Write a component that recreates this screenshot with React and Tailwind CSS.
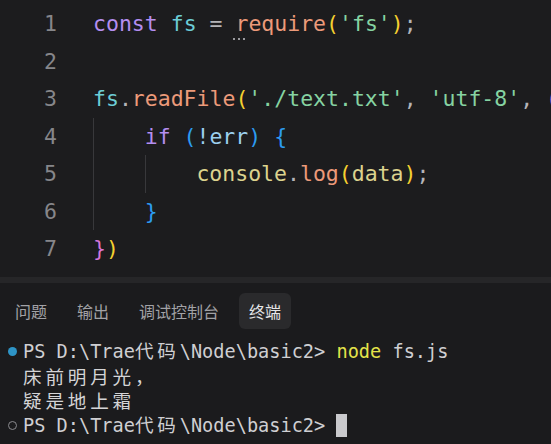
import React from "react";

const mono = { fontFamily: '"DejaVu Sans Mono", "Liberation Mono", "Noto Sans CJK SC", monospace' };

const C = {
  kw: "text-[#b48ef0]",
  id: "text-[#6ccdd6]",
  op: "text-[#b4b4b8]",
  fn: "text-[#ec9a7a]",
  str: "text-[#86d3a2]",
  y: "text-[#f5d030]",
  m: "text-[#d775d8]",
  b: "text-[#2c9bf0]",
  v: "text-[#9ccfee]",
  yl: "text-[#dcd38e]",
};

const Indent = () => <div className="self-stretch w-[51.7px] shrink-0 border-l border-[#38383b]" />;

const Line = ({ n, indent = 0, children }) => (
  <div className="flex h-[37.5px] items-center">
    <div className="w-[57px] shrink-0 text-right text-[#86868a]">{n}</div>
    <div className="ml-[36px] flex self-stretch items-center whitespace-pre">
      {Array.from({ length: indent }).map((_, i) => (
        <Indent key={i} />
      ))}
      <span>{children}</span>
    </div>
  </div>
);

const Cjk = ({ text }) =>
  text.split("").map((ch, i) => (
    <span key={i} className="inline-block w-[22.4px]" style={{ fontFamily: '"Noto Sans CJK SC", sans-serif' }}>
      {ch}
    </span>
  ));

export default function App() {
  return (
    <div className="w-[551px] h-[444px] overflow-hidden bg-[#1c1c1e] flex flex-col">
      {/* Editor */}
      <div className="h-[277px] pt-[5px] text-[21.5px] leading-none" style={mono}>
        <Line n="1">
          <span className={C.kw}>const</span> <span className={C.id}>fs</span> <span className={C.op}>=</span>{" "}
          <span className={`${C.fn} relative`}>
            r
            <span className="absolute left-[-2px] top-[27px] flex gap-[3px]">
              <span className="w-[2px] h-[2px] bg-[#9a9a9e]" />
              <span className="w-[2px] h-[2px] bg-[#9a9a9e]" />
              <span className="w-[2px] h-[2px] bg-[#9a9a9e]" />
            </span>
          </span>
          <span className={C.fn}>equire</span>
          <span className={C.y}>(</span>
          <span className={C.str}>'fs'</span>
          <span className={C.y}>)</span>
          <span className={C.op}>;</span>
        </Line>
        <Line n="2"> </Line>
        <Line n="3">
          <span className={C.id}>fs</span>
          <span className={C.op}>.</span>
          <span className={C.fn}>readFile</span>
          <span className={C.y}>(</span>
          <span className={C.str}>'./text.txt'</span>
          <span className={C.op}>, </span>
          <span className={C.str}>'utf-8'</span>
          <span className={C.op}>, </span>
          <span className={C.m}>(</span>
        </Line>
        <Line n="4" indent={1}>
          <span className={C.kw}>if</span> <span className={C.b}>(</span>
          <span className={C.v}>!err</span>
          <span className={C.b}>)</span> <span className={C.b}>{"{"}</span>
        </Line>
        <Line n="5" indent={2}>
          <span className={C.yl}>console</span>
          <span className={C.op}>.</span>
          <span className={C.fn}>log</span>
          <span className={C.y}>(</span>
          <span className={C.yl}>data</span>
          <span className={C.y}>)</span>
          <span className={C.op}>;</span>
        </Line>
        <Line n="6" indent={1}>
          <span className={C.b}>{"}"}</span>
        </Line>
        <Line n="7">
          <span className={C.m}>{"}"}</span>
          <span className={C.y}>)</span>
        </Line>
      </div>

      {/* Divider */}
      <div className="h-[6px] bg-[#262628]" />

      {/* Panel */}
      <div className="flex-1 bg-[#1b1b1d]">
        <div
          className="mt-[10px] flex gap-[10px] pl-[5px] text-[16px]"
          style={{ fontFamily: '"Noto Sans CJK SC", sans-serif' }}
        >
          {["问题", "输出", "调试控制台"].map((t) => (
            <div key={t} className="h-[36px] px-[10px] flex items-center rounded-md text-[#a2a2a6]">
              {t}
            </div>
          ))}
          <div className="h-[36px] px-[10px] flex items-center rounded-md bg-[#2a2a2c] text-[#e6e6e8]">终端</div>
        </div>

        <div className="mt-[10px] text-[18.6px] leading-[24.7px] text-[#cfcfd2]" style={mono}>
          <div className="flex items-center h-[24.7px] whitespace-pre">
            <div className="w-[23px] flex justify-center pl-[1px]">
              <div className="w-[9px] h-[9px] rounded-full bg-[#2e94c6]" />
            </div>
            <span>
              PS D:\Trae
              <Cjk text="代码" />
              \Node\basic2&gt; <span className="text-[#e4e44a]">node</span> fs.js
            </span>
          </div>
          <div className="flex items-center h-[24.7px] pl-[23px] text-[#d4d4d6]">
            <Cjk text="床前明月光，" />
          </div>
          <div className="flex items-center h-[24.7px] pl-[23px] text-[#d4d4d6]">
            <Cjk text="疑是地上霜" />
          </div>
          <div className="flex items-center h-[24.7px] whitespace-pre">
            <div className="w-[23px] flex justify-center pl-[1px]">
              <div className="w-[9px] h-[9px] rounded-full border-[1.5px] border-[#8a8a8e]" />
            </div>
            <span>
              PS D:\Trae
              <Cjk text="代码" />
              \Node\basic2&gt;{" "}
            </span>
            <span className="inline-block w-[11px] h-[23px] bg-[#cacacd]" />
          </div>
        </div>
      </div>
    </div>
  );
}
